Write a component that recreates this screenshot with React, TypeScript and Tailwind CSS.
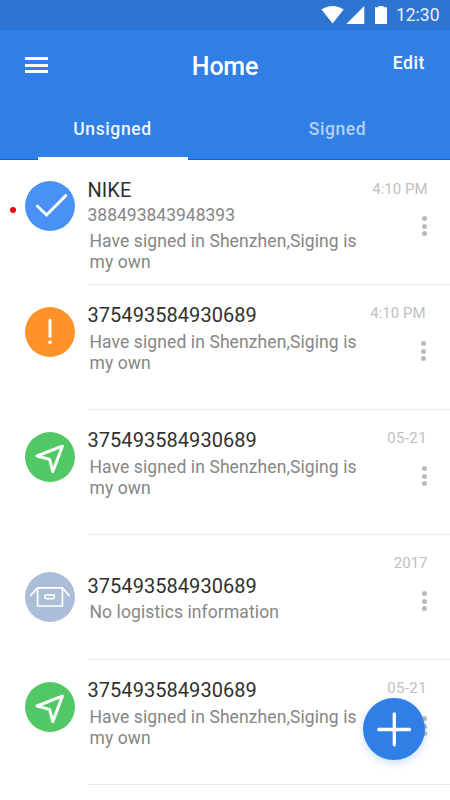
import type { ReactNode } from "react";
import clsx from "clsx";

type Status = "signed" | "warning" | "transit" | "empty";

interface Parcel {
  id: string;
  status: Status;
  title: string;
  number?: string;
  description: string;
  time: string;
  unread?: boolean;
  /** Spacing tweaks per row */
  bodyClass: string;
  iconClass: string;
  timeClass: string;
  menuClass: string;
}

const PARCELS: Parcel[] = [
  {
    id: "1",
    status: "signed",
    title: "NIKE",
    number: "388493843948393",
    description: "Have signed in Shenzhen,Siging is my own",
    time: "4:10 PM",
    unread: true,
    bodyClass: "pt-[18px]",
    iconClass: "mt-[21px]",
    timeClass: "mr-[22.5px] mt-[19px]",
    menuClass: "mr-[23px]",
  },
  {
    id: "2",
    status: "warning",
    title: "375493584930689",
    description: "Have signed in Shenzhen,Siging is my own",
    time: "4:10 PM",
    bodyClass: "pt-[18px]",
    iconClass: "mt-[22px]",
    timeClass: "mr-[24.5px] mt-[18px] mb-px",
    menuClass: "mr-[24.5px]",
  },
  {
    id: "3",
    status: "transit",
    title: "375493584930689",
    description: "Have signed in Shenzhen,Siging is my own",
    time: "05-21",
    bodyClass: "pt-[18px]",
    iconClass: "mt-[22px]",
    timeClass: "mr-[23px] mt-[18px] mb-px tracking-[0.4px]",
    menuClass: "mr-[23px]",
  },
  {
    id: "4",
    status: "empty",
    title: "375493584930689",
    description: "No logistics information",
    time: "2017",
    bodyClass: "pt-[38.5px]",
    iconClass: "mt-[37px]",
    timeClass: "mr-[22.5px] mt-[18px] mb-px",
    menuClass: "mr-[23px]",
  },
  {
    id: "5",
    status: "transit",
    title: "375493584930689",
    description: "Have signed in Shenzhen,Siging is my own",
    time: "05-21",
    bodyClass: "pt-[18px]",
    iconClass: "mt-[22px]",
    timeClass: "mr-[23px] mt-[18px] mb-px tracking-[0.4px]",
    menuClass: "mr-[23px]",
  },
];

const STATUS_COLORS: Record<Status, string> = {
  signed: "bg-[#4a91f5]",
  warning: "bg-[#ff9228]",
  transit: "bg-[#51c865]",
  empty: "bg-[#acbdd7]",
};

const STATUS_ICONS: Record<Status, ReactNode> = {
  signed: (
    <path d="M12.5 25.2 21.5 34 40.8 14.6" strokeWidth="3" strokeLinecap="round" />
  ),
  warning: (
    <>
      <path d="M25 13.2V29.2" strokeWidth="3" strokeLinecap="round" />
      <circle cx="25" cy="35.2" r="1.7" fill="#fff" stroke="none" />
    </>
  ),
  transit: (
    <path
      d="M37.4 14.2 12 24 24.6 27.4 27.8 39.6Z"
      strokeWidth="3"
      strokeLinejoin="round"
    />
  ),
  empty: (
    <g strokeWidth="1.7" strokeLinecap="round" strokeLinejoin="round">
      <path d="M5.6 23.4 12.6 15.8H37.4L44 23.4" />
      <path d="M12.6 15.8V34H37.4V15.8" />
      <rect x="19.8" y="22.8" width="9.6" height="3.9" rx="1.6" />
    </g>
  ),
};

function StatusBadge({ status, className }: { status: Status; className: string }) {
  return (
    <div
      className={clsx(
        "size-[50px] shrink-0 rounded-full",
        STATUS_COLORS[status],
        className,
      )}
    >
      <svg viewBox="0 0 50 50" className="size-full" fill="none" stroke="#fff">
        {STATUS_ICONS[status]}
      </svg>
    </div>
  );
}

function ParcelRow({ parcel }: { parcel: Parcel }) {
  return (
    <li className="flex h-[125px]">
      <div className="flex w-[25px] shrink-0 justify-end pt-[47px] pr-[9.5px]">
        {parcel.unread && <span className="size-[6px] rounded-full bg-[#f90000]" />}
      </div>
      <StatusBadge status={parcel.status} className={parcel.iconClass} />
      <div className="ml-[12.5px] flex flex-1 border-b border-[#ececee]">
        <div className={clsx("w-[275px] shrink-0", parcel.bodyClass)}>
          <h2 className="text-[20px] leading-[24px] tracking-[0.05px] text-[#303030]">
            {parcel.title}
          </h2>
          {parcel.number && (
            <p className="mt-[1.5px] text-[17.5px] leading-[22px] text-[#868686]">
              {parcel.number}
            </p>
          )}
          <p
            className={clsx(
              "pl-[2px] text-[17.5px] leading-[21px] tracking-[0.1px] text-[#868686]",
              parcel.number ? "mt-[5px]" : "mt-[4.5px]",
            )}
          >
            {parcel.description}
          </p>
        </div>
        <div className="flex flex-1 flex-col items-end">
          <time
            className={clsx(
              "text-[15px] leading-[20px] whitespace-nowrap text-[#c0c0c0]",
              parcel.timeClass,
            )}
          >
            {parcel.time}
          </time>
          <button
            aria-label="More"
            className={clsx("mt-[17px] flex flex-col gap-[2.5px]", parcel.menuClass)}
          >
            <span className="size-[5px] rounded-full bg-[#bababa]" />
            <span className="size-[5px] rounded-full bg-[#bababa]" />
            <span className="size-[5px] rounded-full bg-[#bababa]" />
          </button>
        </div>
      </div>
    </li>
  );
}

function StatusBar() {
  return (
    <div className="flex h-[30px] items-center justify-end bg-[#2d73d2] pr-[10.5px] text-white">
      <svg width="58" height="20" viewBox="0 0 58 20" fill="currentColor">
        <path d="M0.5 4.6C7.1-.2 16.2-.2 22.7 4.6L11.6 18.6Z" />
        <path d="M43.3 1V19H25.3Z" />
      </svg>
      <svg
        width="12"
        height="20"
        viewBox="0 0 12 20"
        fill="currentColor"
        className="mr-[9px] -ml-[4px]"
      >
        <path d="M3.5 1H8.5V2.2H12V19H0V2.2H3.5Z" />
      </svg>
      <span className="text-[17.5px] leading-[30px] text-[#e8f0fb]">12:30</span>
    </div>
  );
}

export default function App() {
  return (
    <div className="relative h-[800px] w-[450px] overflow-hidden bg-white font-['Roboto',sans-serif]">
      <StatusBar />
      <header className="flex h-[130px] flex-col border-b border-[#1069d8] bg-[#307fe6]">
        <div className="grid h-[69px] grid-cols-[1fr_auto_1fr] items-center px-[25px] text-white">
          <button aria-label="Menu" className="mt-px flex w-[23px] flex-col gap-[3.5px]">
            <span className="h-[3px] bg-white" />
            <span className="h-[3px] bg-white" />
            <span className="h-[3px] bg-white" />
          </button>
          <h1 className="pt-[4px] text-[25px] leading-[30px] font-medium tracking-[-0.2px]">
            Home
          </h1>
          <button className="justify-self-end pb-[4px] text-[17.5px] leading-[22px] font-medium tracking-[0.6px]">
            Edit
          </button>
        </div>
        <nav className="grid h-[60px] grid-cols-2 text-[17.5px] font-medium tracking-[0.6px]">
          <button className="flex flex-col items-center text-[#f0f5fd]">
            <span className="h-[58px] leading-[60px]">Unsigned</span>
            <span className="h-[3px] w-[150px] shrink-0 bg-white" />
          </button>
          <button className="flex flex-col items-center text-[#b4d0f6]">
            <span className="leading-[60px]">Signed</span>
          </button>
        </nav>
      </header>
      <ul>
        {PARCELS.map((parcel) => (
          <ParcelRow key={parcel.id} parcel={parcel} />
        ))}
      </ul>
      <button
        aria-label="Add"
        className="absolute top-[697.5px] left-[362.5px] size-[62.5px] rounded-full bg-[#307fe6] shadow-[0_3px_8px_rgba(48,127,230,0.25)]"
      >
        <svg
          viewBox="0 0 62.5 62.5"
          className="size-full"
          stroke="#fff"
          strokeWidth="3.3"
          strokeLinecap="round"
        >
          <path d="M15.8 31.5H46.5M31.3 16V46.8" />
        </svg>
      </button>
    </div>
  );
}
